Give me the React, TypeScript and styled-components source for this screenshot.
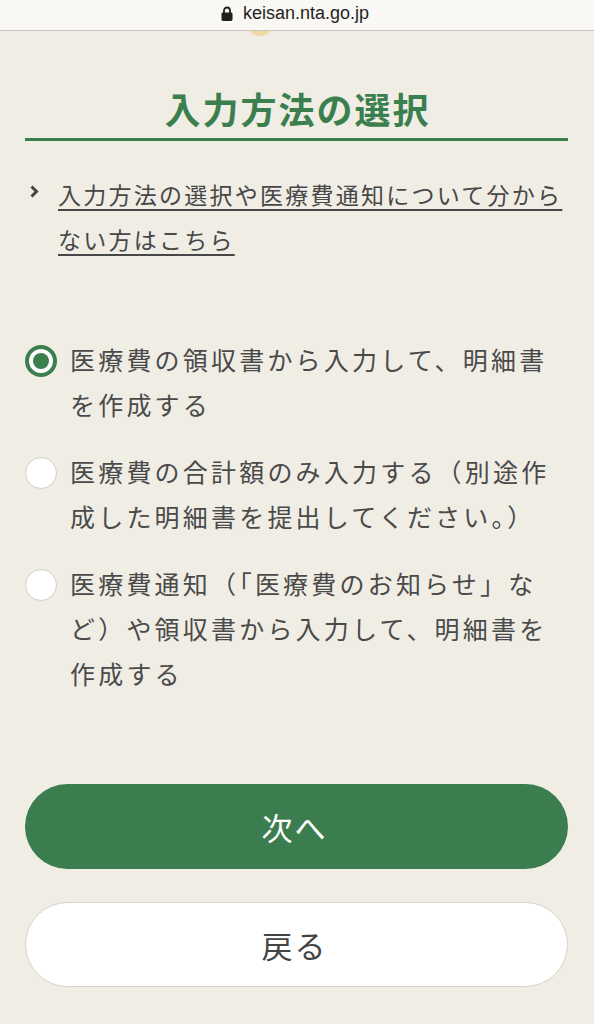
import React, { useState } from "react";
import styled, { createGlobalStyle } from "styled-components";

const GlobalStyle = createGlobalStyle`
  html, body {
    margin: 0;
    padding: 0;
    background: #f0ede5;
  }
  body {
    font-family: "Noto Sans CJK JP", "Noto Sans", sans-serif;
  }
  * { box-sizing: border-box; }
`;

const Page = styled.div`
  width: 594px;
  min-height: 1024px;
  background: #f0ede5;
  position: relative;
  overflow: hidden;
`;

const UrlBar = styled.div`
  height: 31px;
  background: #faf8f4;
  border-bottom: 1px solid #c9c6c0;
  display: flex;
  align-items: center;
  justify-content: center;
  gap: 10px;
  padding-bottom: 3px;
  padding-right: 4px;
  font-family: "Liberation Sans", Arial, sans-serif;
  font-size: 18px;
  color: #1f1f1f;
  position: relative;
  z-index: 2;
`;

const Peek = styled.div`
  position: absolute;
  left: 247px;
  top: 12px;
  width: 26px;
  height: 24px;
  border-radius: 50%;
  background: #f2d8a4;
  z-index: 1;
`;

const Main = styled.main`
  padding: 57px 26px 40px 25px;
  display: flex;
  flex-direction: column;
`;

const Title = styled.h1`
  margin: 0;
  padding-bottom: 10px;
  border-bottom: 3px solid #3b7f4f;
  text-align: center;
  font-size: 36px;
  line-height: 40px;
  font-weight: 700;
  letter-spacing: 2px;
  color: #3b7f4f;
  padding-left: 2px;
`;

const HelpRow = styled.div`
  margin-top: 31px;
  display: flex;
  align-items: flex-start;
`;

const Chevron = styled.span`
  width: 33px;
  height: 45px;
  display: flex;
  align-items: center;
  padding-left: 4px;
  flex-shrink: 0;
  margin-top: -3px;
`;

const HelpLink = styled.a`
  font-size: 23px;
  line-height: 45px;
  letter-spacing: 2.25px;
  color: #474747;
  text-decoration: underline;
  text-decoration-thickness: 1.5px;
  text-underline-offset: 5px;
  cursor: pointer;
`;

const Options = styled.div`
  margin-top: 75px;
  display: flex;
  flex-direction: column;
  gap: 22px;
`;

const Option = styled.label`
  display: flex;
  align-items: flex-start;
  gap: 13px;
  cursor: pointer;
`;

const Radio = styled.span<{ $checked: boolean }>`
  width: 32px;
  height: 32px;
  margin-top: 8px;
  border-radius: 50%;
  flex-shrink: 0;
  background: #fff;
  border: ${(p) => (p.$checked ? "4px solid #3b7f4f" : "1px solid #d3cec5")};
  display: flex;
  align-items: center;
  justify-content: center;
  &::after {
    content: "";
    display: ${(p) => (p.$checked ? "block" : "none")};
    width: 16px;
    height: 16px;
    border-radius: 50%;
    background: #3b7f4f;
  }
`;

const OptionText = styled.span`
  font-size: 25px;
  line-height: 45px;
  letter-spacing: 3.2px;
  color: #4a4a4a;
`;

const Buttons = styled.div`
  margin-top: 88px;
  display: flex;
  flex-direction: column;
  gap: 33px;
`;

const Button = styled.button<{ $primary?: boolean }>`
  height: 85px;
  width: 100%;
  border-radius: 43px;
  font-family: "Noto Sans CJK JP", "Noto Sans", sans-serif;
  font-size: 31px;
  letter-spacing: 2px;
  padding-left: 2px;
  cursor: pointer;
  background: ${(p) => (p.$primary ? "#3b7d4f" : "#ffffff")};
  color: ${(p) => (p.$primary ? "#ffffff" : "#444444")};
  border: ${(p) => (p.$primary ? "none" : "1.5px solid #d8d2c8")};
`;

const options = [
  "医療費の領収書から入力して、明細書を作成する",
  "医療費の合計額のみ入力する（別途作成した明細書を提出してください。）",
  "医療費通知（「医療費のお知らせ」など）や領収書から入力して、明細書を作成する",
];

export default function App() {
  const [selected, setSelected] = useState(0);
  return (
    <Page>
      <GlobalStyle />
      <UrlBar>
        <svg width="12" height="15" viewBox="0 0 12 15" aria-hidden>
          <path d="M3 7V4.5a3 3 0 0 1 6 0V7" fill="none" stroke="#1f1f1f" strokeWidth="1.8" />
          <rect x="0.5" y="6.5" width="11" height="8.5" rx="1.4" fill="#1f1f1f" />
        </svg>
        <span>keisan.nta.go.jp</span>
      </UrlBar>
      <Peek />
      <Main>
        <Title>入力方法の選択</Title>
        <HelpRow>
          <Chevron>
            <svg width="11" height="15" viewBox="0 0 11 15" aria-hidden>
              <path d="M2.5 2.5l5 5-5 5" fill="none" stroke="#444" strokeWidth="3" strokeLinejoin="miter" />
            </svg>
          </Chevron>
          <HelpLink>入力方法の選択や医療費通知について分からない方はこちら</HelpLink>
        </HelpRow>
        <Options>
          {options.map((t, i) => (
            <Option key={i} onClick={() => setSelected(i)}>
              <Radio $checked={selected === i} />
              <OptionText>{t}</OptionText>
            </Option>
          ))}
        </Options>
        <Buttons>
          <Button $primary>次へ</Button>
          <Button>戻る</Button>
        </Buttons>
      </Main>
    </Page>
  );
}
